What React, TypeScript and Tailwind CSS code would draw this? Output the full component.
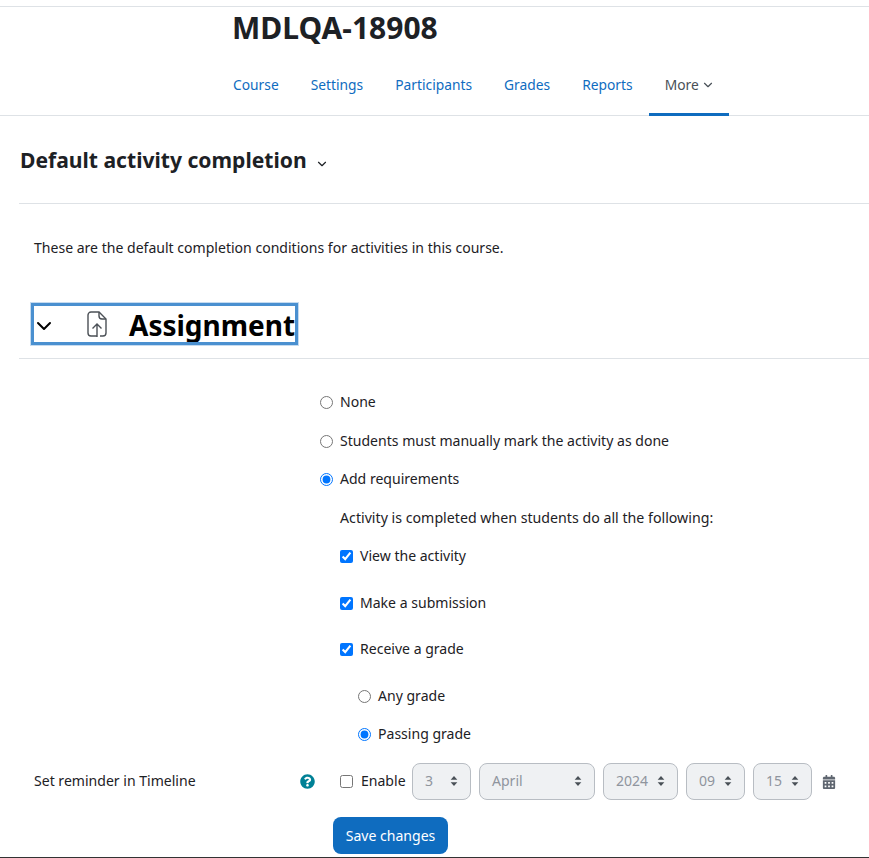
import { ChevronDown } from "lucide-react";
import { FaCalendarAlt, FaQuestionCircle } from "react-icons/fa";

const tabs = ["Course", "Settings", "Participants", "Grades", "Reports"];

function Caret() {
  return (
    <svg viewBox="0 0 8 12" className="h-[10px] w-[8px] shrink-0" fill="#495057">
      <path d="M4 0 L8 4.5 H0 Z M4 12 L0 7.5 H8 Z" />
    </svg>
  );
}

function DateSelect({ value, width }: { value: string; width: string }) {
  return (
    <div
      className={`flex h-[37px] items-center justify-between rounded-lg border border-[#b8bdc3] bg-[#eff1f3] pb-px pl-3 pr-3 text-[#8f959e] ${width}`}
    >
      <span>{value}</span>
      <Caret />
    </div>
  );
}

function FileUploadIcon() {
  return (
    <svg viewBox="0 0 20 27" className="h-[27px] w-[20px]" fill="none" stroke="#4b5056" strokeWidth="1.4">
      <path d="M10 25 H4 a3 3 0 0 1 -3 -3 V4 a3 3 0 0 1 3 -3 H12 L19 8 V22 a3 3 0 0 1 -3 3 H13" />
      <path d="M12 1 V5 a3 3 0 0 0 3 3 H19" />
      <path d="M10 26 V13 M5.5 17.5 L10 13 L14.5 17.5" />
    </svg>
  );
}

export default function App() {
  return (
    <div className="h-[858px] overflow-hidden bg-white font-['Noto_Sans','Open_Sans',sans-serif] text-[14.05px] text-[#1d2125]">
      <header className="mt-[6px] h-[110px] border-y border-[#dee2e6]">
        <h1 className="pl-[232px] pt-[2px] text-[30px] font-bold leading-[38px]">MDLQA-18908</h1>
        <nav className="mt-[7px] flex pl-[217px] text-[13.8px]">
          {tabs.map((tab) => (
            <a key={tab} className="flex h-[62px] items-center px-4 text-[#0f6cbf]">
              {tab}
            </a>
          ))}
          <a className="flex h-[62px] w-[80px] items-center gap-[2px] whitespace-nowrap border-b-[3px] border-[#0f6cbf] px-4 pt-[3px] text-[#495057]">
            More
            <ChevronDown size={14} strokeWidth={2} className="shrink-0" />
          </a>
        </nav>
      </header>

      <div className="ml-[19px] mt-[28px] flex h-[60px] items-start gap-[8px] border-b border-[#dee2e6] pl-px">
        <h2 className="text-[21.1px] font-bold leading-[32px]">Default activity completion</h2>
        <ChevronDown size={14} strokeWidth={2} className="mt-[13px]" />
      </div>

      <p className="ml-[34px] mt-[33px] leading-[22px]">
        These are the default completion conditions for activities in this course.
      </p>

      <div className="ml-[19px] mt-[44px] h-[56px] border-b border-[#dee2e6] pl-[12px]">
        <div className="flex h-[42px] w-[267px] items-center overflow-hidden border-[3px] border-[#4a90d0] text-black ring-1 ring-[#c5dbf0]">
          <ChevronDown size={24} strokeWidth={2} className="ml-[-2px] mt-[4px] shrink-0" />
          <span className="ml-[31px] shrink-0">
            <FileUploadIcon />
          </span>
          <span className="ml-[22px] shrink-0 whitespace-nowrap pt-[2px] text-[28px] font-bold">Assignment</span>
        </div>
      </div>

      <div className="ml-[320px] mt-[32px] flex flex-col">
        <label className="flex h-[22px] items-center gap-[7px]">
          <input type="radio" name="completion" />
          None
        </label>
        <label className="mt-[17px] flex h-[22px] items-center gap-[7px]">
          <input type="radio" name="completion" />
          Students must manually mark the activity as done
        </label>
        <label className="mt-[16px] flex h-[22px] items-center gap-[7px]">
          <input type="radio" name="completion" defaultChecked />
          Add requirements
        </label>
        <p className="ml-[20px] mt-[17px] text-[14.2px] leading-[22px]">
          Activity is completed when students do all the following:
        </p>
        <label className="ml-[20px] mt-[16px] flex h-[22px] items-center gap-[7px]">
          <input type="checkbox" defaultChecked />
          View the activity
        </label>
        <label className="ml-[20px] mt-[25px] flex h-[22px] items-center gap-[7px]">
          <input type="checkbox" defaultChecked />
          Make a submission
        </label>
        <label className="ml-[20px] mt-[24px] flex h-[22px] items-center gap-[7px]">
          <input type="checkbox" defaultChecked />
          Receive a grade
        </label>
        <label className="ml-[38px] mt-[25px] flex h-[22px] items-center gap-[7px]">
          <input type="radio" name="grade" />
          Any grade
        </label>
        <label className="ml-[38px] mt-[16px] flex h-[22px] items-center gap-[7px]">
          <input type="radio" name="grade" defaultChecked />
          Passing grade
        </label>
      </div>

      <div className="mt-[18px] flex h-[37px] items-center">
        <span className="ml-[34px] w-[266px] pb-px">Set reminder in Timeline</span>
        <FaQuestionCircle size={15} className="text-[#008196]" />
        <input type="checkbox" className="ml-[25px]" />
        <span className="ml-[8px] w-[44px] pb-px">Enable</span>
        <div className="ml-[7px] flex gap-2">
          <DateSelect value="3" width="w-[59px]" />
          <DateSelect value="April" width="w-[116px]" />
          <DateSelect value="2024" width="w-[75px]" />
          <DateSelect value="09" width="w-[59px]" />
          <DateSelect value="15" width="w-[59px]" />
        </div>
        <FaCalendarAlt size={14} className="ml-[10px] text-[#5f6670]" />
      </div>

      <button className="ml-[333px] mt-[17px] h-[37px] w-[115px] rounded-lg bg-[#0f6cbf] text-white">
        Save changes
      </button>
      <div className="mt-[3px] h-px bg-[#333]" />
    </div>
  );
}
